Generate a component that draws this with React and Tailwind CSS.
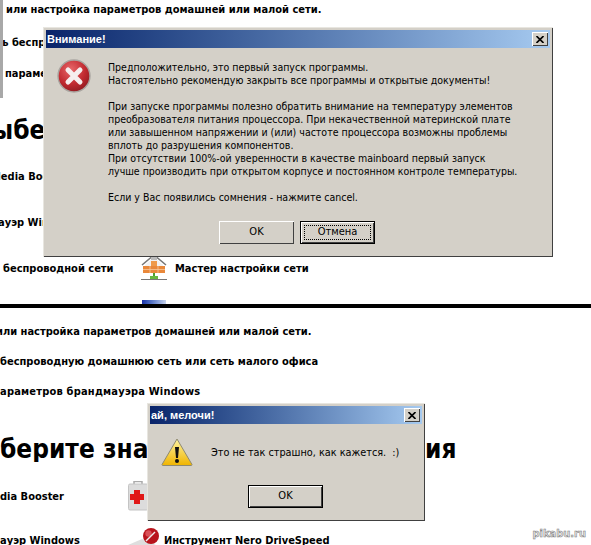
function CloseBox() {
  return (
    <div className="w-4 h-[14px] bg-[#d4d0c8] shadow-[inset_1px_1px_0_#fff,inset_-1px_-1px_0_#404040] flex items-center justify-center">
      <svg width="8" height="7" viewBox="0 0 8 7">
        <path d="M0.5 0 L7.5 7 M7.5 0 L0.5 7" stroke="#000" strokeWidth="1.6" />
      </svg>
    </div>
  );
}

function TitleBar({ title }) {
  return (
    <div className="h-[18px] bg-gradient-to-r from-[#0a246a] to-[#a6caf0] flex items-center justify-between pl-[1px] pr-[2px]">
      <span className="text-white text-[11px] font-bold font-['Liberation_Sans',sans-serif] leading-none">
        {title}
      </span>
      <CloseBox />
    </div>
  );
}

function WinButton({ label, kind }) {
  if (kind === 'focus') {
    return (
      <div className="w-[75px] h-[23px] border border-black bg-[#d4d0c8] shadow-[inset_1px_1px_0_#fff,inset_-1px_-1px_0_#404040] p-[3px]">
        <div className="h-full border border-dotted border-black flex items-center justify-center text-[11px] text-black">
          {label}
        </div>
      </div>
    );
  }
  if (kind === 'default') {
    return (
      <div className="w-[75px] h-[23px] border border-black bg-[#d4d0c8] shadow-[inset_1px_1px_0_#fff,inset_-1px_-1px_0_#404040] flex items-center justify-center text-[11px] text-black">
        {label}
      </div>
    );
  }
  return (
    <div className="w-[75px] h-[23px] bg-[#d4d0c8] shadow-[inset_1px_1px_0_#fff,inset_-1px_-1px_0_#404040] flex items-center justify-center text-[11px] text-black">
      {label}
    </div>
  );
}

function ErrorIcon() {
  return (
    <svg width="34" height="34" viewBox="0 0 34 34">
      <defs>
        <radialGradient id="red" cx="40%" cy="30%" r="75%">
          <stop offset="0" stopColor="#e8686a" />
          <stop offset="0.6" stopColor="#c12a30" />
          <stop offset="1" stopColor="#8c1a20" />
        </radialGradient>
      </defs>
      <circle cx="17" cy="17" r="16" fill="url(#red)" stroke="#a9a5a0" strokeWidth="1.4" />
      <path d="M11 11 L23 23 M23 11 L11 23" stroke="#f6eeee" strokeWidth="5" strokeLinecap="round" />
    </svg>
  );
}

function WarnIcon() {
  return (
    <svg width="32" height="29" viewBox="0 0 32 29">
      <defs>
        <linearGradient id="yel" x1="0" y1="0" x2="0" y2="1">
          <stop offset="0" stopColor="#fdf3a0" />
          <stop offset="1" stopColor="#f0b400" />
        </linearGradient>
      </defs>
      <path d="M16 1 L31 26.5 Q31 27.5 30 27.5 L2 27.5 Q1 27.5 1 26.5 Z" fill="url(#yel)" stroke="#8f8a70" strokeWidth="1" />
      <path d="M14 9 L18 9 L17 20 L15 20 Z" fill="#111" />
      <circle cx="16" cy="23" r="2" fill="#111" />
    </svg>
  );
}

function HomeNetIcon() {
  return (
    <svg width="28" height="28" viewBox="0 0 28 28">
      <path d="M2 11 L14 1 L26 11" fill="none" stroke="#777" strokeWidth="1.6" />
      <path d="M5 11 L14 3 L23 11 L23 13 L5 13 Z" fill="#f2f2f2" />
      <rect x="11" y="3" width="6" height="3" fill="#bbb" />
      <rect x="11" y="7" width="6" height="5" fill="#ef9a4a" />
      <rect x="3" y="12" width="22" height="7" fill="#e9883a" />
      <path d="M3 15.5 H25 M10 12 V19 M18 12 V19" stroke="#f8c89a" strokeWidth="0.8" />
      <rect x="13" y="19" width="2" height="4" fill="#50a030" />
      <rect x="10" y="22" width="8" height="3" fill="#66b840" />
      <rect x="1" y="25" width="26" height="1" fill="#777" />
    </svg>
  );
}

function KitIcon() {
  return (
    <svg width="20" height="30" viewBox="0 0 20 30">
      <path d="M6 3 V0.5 H14 V3" fill="none" stroke="#aaa" strokeWidth="1.5" />
      <rect x="0.5" y="3" width="19.5" height="26" rx="1.5" fill="#dcdcdc" stroke="#c4c4c4" />
      <path d="M6 9 H12 V13 H16 V19 H12 V23 H6 V19 H2 V13 H6 Z" fill="#e01818" />
    </svg>
  );
}

function DriveSpeedIcon() {
  return (
    <svg width="36" height="17" viewBox="0 0 36 17" className="shrink-0">
      <path d="M0 17 L14 11 L28 17 Z" fill="#dedede" />
      <circle cx="23" cy="8" r="8" fill="#b8141c" />
      <circle cx="20.5" cy="5.5" r="3.2" fill="#d95058" />
      <path d="M18 13 L27 4" stroke="#eee" strokeWidth="1.4" />
    </svg>
  );
}

export default function App() {
  const bg = "font-['DejaVu_Sans_Condensed','DejaVu_Sans',sans-serif] font-bold text-black text-[11px] whitespace-nowrap leading-none";

  return (
    <div className="w-[591px] h-[545px] bg-white overflow-hidden font-['DejaVu_Sans_Condensed','DejaVu_Sans',sans-serif]">
      {/* first screenshot */}
      <div className="relative h-[304px] overflow-hidden">
        <div className="absolute left-0 top-0 w-[3px] h-[98px] bg-[#a8a8a8]" />
        <div className={bg}>
          <div className="h-[16px] mt-[1px] pl-[6px] flex items-center">или настройка параметров домашней или малой сети.</div>
          <div className="h-[16px] mt-[17px] w-[43px] overflow-hidden flex items-center">
            <span className="-ml-[38px]">Создать беспроводную</span>
          </div>
          <div className="h-[16px] mt-[15px] w-[43px] overflow-hidden pl-[5px] flex items-center">параметров</div>
          <div className="h-[40px] mt-[29px] w-[43px] overflow-hidden flex items-center text-[26px]">
            <span className="-ml-[8px]">ыберите</span>
          </div>
          <div className="h-[16px] mt-[18px] w-[43px] overflow-hidden flex items-center">
            <span className="-ml-[9px]">Media Booster</span>
          </div>
          <div className="h-[16px] mt-[30px] w-[43px] overflow-hidden flex items-center">
            <span className="-ml-[10px]">мауэр Windows</span>
          </div>
          <div className="h-[28px] mt-[24px] pl-[3px] flex items-center">
            <span className="w-[137px]">беспроводной сети</span>
            <HomeNetIcon />
            <span className="ml-[7px]">Мастер настройки сети</span>
          </div>
          <div className="pl-[142px] mt-[18px]">
            <div className="w-[24px] h-[8px] bg-gradient-to-r from-[#1a2fa8] to-[#c8d4ee]" />
          </div>
        </div>

        {/* Внимание! */}
        <div className="absolute left-[43px] top-[27px] w-[510px] h-[230px] bg-[#d4d0c8] p-[3px] shadow-[inset_1px_1px_0_#e8e6e0,inset_-1px_-1px_0_#404040]">
          <TitleBar title="Внимание!" />
          <div className="flex pl-[11px] pt-[11px]">
            <ErrorIcon />
            <div className="ml-[17px] pt-[2px] text-[10.5px] leading-[13px] text-black whitespace-nowrap">
              <p>Предположительно, это первый запуск программы.</p>
              <p>Настоятельно рекомендую закрыть все программы и открытые документы!</p>
              <p className="mt-[13px]">При запуске программы полезно обратить внимание на температуру элементов</p>
              <p>преобразователя питания процессора. При некачественной материнской плате</p>
              <p>или завышенном напряжении и (или) частоте процессора возможны проблемы</p>
              <p>вплоть до разрушения компонентов.</p>
              <p>При отсутствии 100%-ой уверенности в качестве mainboard первый запуск</p>
              <p>лучше производить при открытом корпусе и постоянном контроле температуры.</p>
              <p className="mt-[13px]">Если у Вас появились сомнения - нажмите cancel.</p>
            </div>
          </div>
          <div className="flex justify-center gap-[6px] mt-[17px] pr-[2px]">
            <WinButton label="OK" />
            <WinButton label="Отмена" kind="focus" />
          </div>
        </div>
      </div>

      <div className="h-[4px] bg-black" />

      {/* second screenshot */}
      <div className="relative h-[237px] overflow-hidden">
        <div className={bg}>
          <div className="h-[16px] mt-[15px] flex items-center overflow-hidden">
            <span className="-ml-[4px]">или настройка параметров домашней или малой сети.</span>
          </div>
          <div className="h-[16px] mt-[14px] flex items-center">беспроводную домашнюю сеть или сеть малого офиса</div>
          <div className="h-[16px] mt-[14px] flex items-center tracking-[0.2px]">араметров брандмауэра Windows</div>
          <div className="h-[40px] mt-[30px] flex items-center text-[26px]">
            <span className="w-[147px] overflow-hidden">берите значок</span>
            <span className="ml-[278px]">ия</span>
          </div>
          <div className="h-[30px] mt-[12px] flex items-center">
            <span className="w-[128px]">dia Booster</span>
            <KitIcon />
          </div>
          <div className="h-[25px] mt-[17px] flex items-start">
            <span className="w-[128px] mt-[7px]">ауэр Windows</span>
            <DriveSpeedIcon />
            <span className="mt-[7px]">Инструмент Nero DriveSpeed</span>
          </div>
        </div>

        {/* ай, мелочи! */}
        <div className="absolute left-[147px] top-[95px] w-[278px] h-[118px] bg-[#d4d0c8] p-[3px] shadow-[inset_1px_1px_0_#e8e6e0,inset_-1px_-1px_0_#404040]">
          <TitleBar title="ай, мелочи!" />
          <div className="flex items-start pl-[11px] pt-[14px]">
            <WarnIcon />
            <span className="ml-[18px] mt-[7px] text-[10.8px] text-black whitespace-pre">Это не так страшно, как кажется.  :)</span>
          </div>
          <div className="flex justify-center mt-[18px] pr-[1px]">
            <WinButton label="OK" kind="default" />
          </div>
        </div>

        <div className="absolute right-[5px] bottom-[6px] text-[11px] font-bold leading-none text-[#e8e8e8] [-webkit-text-stroke:0.5px_#777]">
          pikabu.ru
        </div>
      </div>
    </div>
  );
}
